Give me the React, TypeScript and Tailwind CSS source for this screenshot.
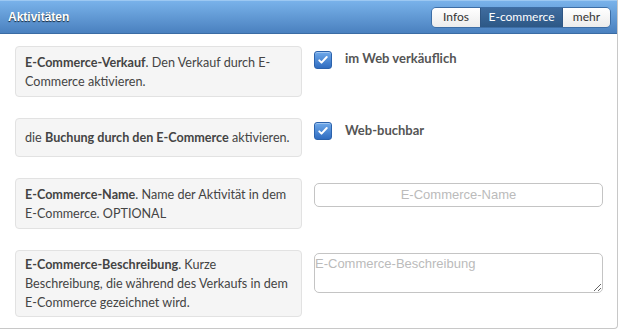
import React from 'react';

const body = { fontFamily: 'Lato, "Open Sans", sans-serif' };
const arial = { fontFamily: '"Liberation Sans", Arial, sans-serif' };

function Check() {
  return (
    <span className="flex h-[18px] w-[18px] shrink-0 items-center justify-center rounded-[3px] border border-[#2b62ac] bg-gradient-to-b from-[#6fa9ea] to-[#2f6cc0] shadow-[inset_0_1px_0_rgba(255,255,255,0.35)]">
      <svg viewBox="0 0 16 16" className="h-[12px] w-[12px]">
        <path d="M3 8.5l3 3 7-7.5" fill="none" stroke="#fff" strokeWidth={2.6} strokeLinecap="round" strokeLinejoin="round" />
      </svg>
    </span>
  );
}

function Label({ h, children }: { h: string; children: React.ReactNode }) {
  return (
    <div
      className={`flex w-[287px] shrink-0 items-center rounded-[4px] border border-[#e2e2e2] bg-[#f5f5f5] px-[9px] text-[12.6px] leading-[19px] text-[#444] ${h}`}
      style={body}
    >
      <div className="whitespace-nowrap">{children}</div>
    </div>
  );
}

export default function App() {
  return (
    <div className="h-[332px] w-[625px] bg-white">
      <div className="h-[329px] w-[618px] overflow-hidden rounded-br-[4px] border-b border-r border-[#c8c8c8]">
        {/* header */}
        <div className="flex h-[34px] items-center justify-between border-b border-[#3b6ca4] border-t border-t-[#9cc8f2] bg-gradient-to-b from-[#79b2ea] to-[#4a81bf] pl-[8px] pr-[6px]">
          <span
            className="text-[12px] font-bold text-white [text-shadow:0_1px_1px_rgba(0,0,0,0.75)]"
            style={arial}
          >
            Aktivitäten
          </span>
          <div className="flex h-[21px] overflow-hidden rounded-[5px] border border-[#3d6ea6] text-[12px]" style={body}>
            <span className="flex w-[48px] items-center justify-center bg-gradient-to-b from-white to-[#ececec] text-[#333]">Infos</span>
            <span className="flex w-[83px] items-center justify-center border-x border-[#2f5684] bg-gradient-to-b from-[#3f6c9f] to-[#2d5886] text-white">E-commerce</span>
            <span className="flex w-[47px] items-center justify-center bg-gradient-to-b from-white to-[#ececec] text-[#333]">mehr</span>
          </div>
        </div>

        {/* rows */}
        <div className="flex flex-col gap-[21px] pl-[15px] pt-[12px]">
          <div className="flex gap-[12px]">
            <Label h="h-[51px]">
              <b>E-Commerce-Verkauf</b>. Den Verkauf durch E-
              <br />
              Commerce aktivieren.
            </Label>
            <div className="flex items-start gap-[13px] pt-[5px] text-[13px] font-bold text-[#555]" style={body}>
              <Check />
              <span className="leading-[14px]">im Web verkäuflich</span>
            </div>
          </div>

          <div className="flex gap-[12px]">
            <Label h="h-[39px]">
              die <b>Buchung durch den E-Commerce</b> aktivieren.
            </Label>
            <div className="flex items-start gap-[13px] pt-[4px] text-[13px] font-bold text-[#555]" style={body}>
              <Check />
              <span className="leading-[17px]">Web-buchbar</span>
            </div>
          </div>

          <div className="flex gap-[12px]">
            <Label h="h-[51px]">
              <b>E-Commerce-Name</b>. Name der Aktivität in dem
              <br />
              E-Commerce. OPTIONAL
            </Label>
            <div className="pt-[3px]">
              <input
                placeholder="E-Commerce-Name"
                className="h-[24px] w-[289px] rounded-[5px] border border-[#c4c4c4] text-center text-[13px] outline-none placeholder:text-[#bbb]"
                style={arial}
              />
            </div>
          </div>

          <div className="flex gap-[12px]">
            <Label h="h-[67px]">
              <b>E-Commerce-Beschreibung</b>. Kurze
              <br />
              Beschreibung, die während des Verkaufs in dem
              <br />
              E-Commerce gezeichnet wird.
            </Label>
            <div className="pt-[3px]">
              <textarea
                placeholder="E-Commerce-Beschreibung"
                className="block h-[40px] w-[289px] resize rounded-[5px] border border-[#c4c4c4] p-0 text-[13px] leading-[20px] outline-none placeholder:text-[#bbb]"
                style={arial}
              />
            </div>
          </div>
        </div>
      </div>
    </div>
  );
}
